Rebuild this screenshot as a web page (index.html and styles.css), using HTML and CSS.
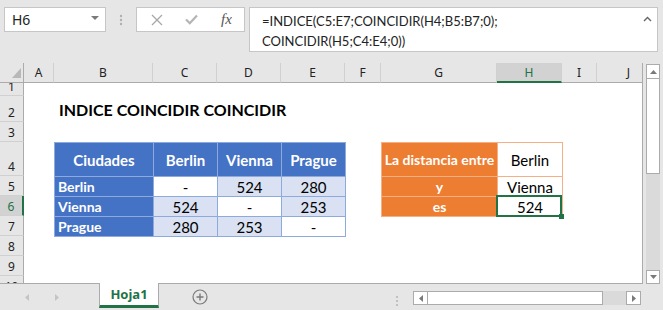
FILE: index.html
```html
<!DOCTYPE html>
<html>
<head>
  <title>INDICE COINCIDIR COINCIDIR</title>
  <link rel="stylesheet" href="styles.css">
</head>
<body>
  <div class="app">

    <!-- name box + formula bar -->
    <div class="toolbar">
      <div class="name-box">
        <span>H6</span>
        <span class="caret"></span>
      </div>
      <div class="grip">
        <svg width="4" height="12" viewBox="0 0 4 12"><circle cx="2" cy="2" r="1.2" fill="#b0b0b0"/><circle cx="2" cy="6" r="1.2" fill="#b0b0b0"/><circle cx="2" cy="10" r="1.2" fill="#b0b0b0"/></svg>
      </div>
      <div class="fn-box">
        <svg class="fn-icon" width="12" height="12" viewBox="0 0 12 12"><path d="M1 1 L11 11 M11 1 L1 11" stroke="#a8a8a8" stroke-width="1.3" fill="none"/></svg>
        <svg class="fn-icon" width="13" height="11" viewBox="0 0 13 11"><path d="M1 5.5 L4.8 9.2 L12 1.5" stroke="#b4b4b4" stroke-width="2.2" fill="none"/></svg>
        <span class="fx">fx</span>
      </div>
      <div class="formula">
        <div class="formula-text">=INDICE(C5:E7;COINCIDIR(H4;B5:B7;0);<br>COINCIDIR(H5;C4:E4;0))</div>
        <svg class="collapse" width="9" height="6" viewBox="0 0 9 6"><path d="M1 5 L4.5 1.5 L8 5" stroke="#666" stroke-width="1.4" fill="none"/></svg>
      </div>
    </div>

    <div class="workspace">
      <div class="sheet">
        <!-- column headers -->
        <div class="corner">
          <svg width="9" height="10" viewBox="0 0 9 10"><polygon points="9,0 9,10 0,10" fill="#b8b8b8"/></svg>
        </div>
        <div class="ch">A</div>
        <div class="ch">B</div>
        <div class="ch">C</div>
        <div class="ch">D</div>
        <div class="ch">E</div>
        <div class="ch">F</div>
        <div class="ch">G</div>
        <div class="ch active">H</div>
        <div class="ch">I</div>
        <div class="ch">J</div>

        <!-- row headers -->
        <div class="rh">1</div>
        <div class="rh">2</div>
        <div class="rh">3</div>
        <div class="rh">4</div>
        <div class="rh">5</div>
        <div class="rh active">6</div>
        <div class="rh">7</div>
        <div class="rh">8</div>
        <div class="rh">9</div>
        <div class="rh">10</div>

        <div class="title">INDICE COINCIDIR COINCIDIR</div>

        <div class="tbl-blue">
          <div class="cell hd">Ciudades</div>
          <div class="cell hd">Berlin</div>
          <div class="cell hd">Vienna</div>
          <div class="cell hd">Prague</div>

          <div class="cell lbl">Berlin</div>
          <div class="cell">-</div>
          <div class="cell lt">524</div>
          <div class="cell lt">280</div>

          <div class="cell lbl">Vienna</div>
          <div class="cell lt">524</div>
          <div class="cell">-</div>
          <div class="cell lt">253</div>

          <div class="cell lbl">Prague</div>
          <div class="cell lt">280</div>
          <div class="cell lt">253</div>
          <div class="cell">-</div>
        </div>

        <div class="tbl-orange">
          <div class="cell og big">La distancia entre</div>
          <div class="cell big-plain">Berlin</div>
          <div class="cell og">y</div>
          <div class="cell">Vienna</div>
          <div class="cell og">es</div>
          <div class="cell selected">524</div>
        </div>
      </div>

      <div class="vscroll">
        <div class="sb-btn">
          <svg width="7" height="4" viewBox="0 0 7 4"><polygon points="0,4 7,4 3.5,0" fill="#7a7a7a"/></svg>
        </div>
        <div class="sb-thumb"></div>
        <div class="sb-track"></div>
        <div class="sb-btn">
          <svg width="7" height="4" viewBox="0 0 7 4"><polygon points="0,0 7,0 3.5,4" fill="#7a7a7a"/></svg>
        </div>
      </div>
    </div>

    <!-- sheet tabs -->
    <div class="tabbar">
      <div class="tab-nav">
        <svg width="4" height="7" viewBox="0 0 4 7"><polygon points="4,0 4,7 0,3.5" fill="#c4c4c4"/></svg>
        <svg width="4" height="7" viewBox="0 0 4 7"><polygon points="0,0 0,7 4,3.5" fill="#c4c4c4"/></svg>
      </div>
      <div class="tab">Hoja1</div>
      <div class="add-sheet">
        <svg width="16" height="16" viewBox="0 0 16 16"><circle cx="8" cy="8" r="7" stroke="#7a7a7a" stroke-width="1.2" fill="none"/><path d="M8 4.5 V11.5 M4.5 8 H11.5" stroke="#7a7a7a" stroke-width="1.4"/></svg>
      </div>
      <div class="tab-grip">
        <svg width="4" height="12" viewBox="0 0 4 12"><circle cx="2" cy="2" r="1.1" fill="#b8b8b8"/><circle cx="2" cy="6" r="1.1" fill="#b8b8b8"/><circle cx="2" cy="10" r="1.1" fill="#b8b8b8"/></svg>
      </div>
      <div class="hscroll">
        <div class="hs-btn">
          <svg width="4" height="7" viewBox="0 0 4 7"><polygon points="4,0 4,7 0,3.5" fill="#7a7a7a"/></svg>
        </div>
        <div class="hs-thumb"></div>
        <div class="hs-track"></div>
        <div class="hs-btn">
          <svg width="4" height="7" viewBox="0 0 4 7"><polygon points="0,0 0,7 4,3.5" fill="#7a7a7a"/></svg>
        </div>
      </div>
    </div>

  </div>
</body>
</html>
```

FILE: styles.css
```css
body {
  margin: 0;
  background: #e6e6e6;
  font-family: 'Lato', 'Liberation Sans', sans-serif;
  color: #000;
}

.app {
  width: 663px;
  height: 310px;
  overflow: hidden;
  background: #e6e6e6;
}

/* toolbar */
.toolbar {
  height: 63px;
  box-sizing: border-box;
  padding: 7px 0 0 4px;
  display: flex;
  align-items: flex-start;
}

.name-box {
  width: 102px;
  height: 25px;
  box-sizing: border-box;
  border: 1px solid #c6c6c6;
  background: #fff;
  display: flex;
  align-items: center;
  justify-content: space-between;
  padding: 0 6px 0 7px;
  font-family: 'Noto Sans', sans-serif;
  font-size: 14px;
  color: #222;
}

.caret {
  width: 0;
  height: 0;
  border-left: 4px solid transparent;
  border-right: 4px solid transparent;
  border-top: 4px solid #7a7a7a;
  margin-top: -3px;
}

.grip {
  width: 30px;
  display: flex;
  justify-content: center;
  padding-top: 7px;
}

.fn-box {
  width: 109px;
  height: 25px;
  box-sizing: border-box;
  border: 1px solid #c6c6c6;
  background: #fff;
  display: flex;
  align-items: center;
  padding-left: 14px;
  gap: 22px;
}

.fx {
  font-family: 'Liberation Serif', serif;
  font-style: italic;
  font-size: 15px;
  color: #555;
  margin-left: 1px;
}

.formula {
  margin-left: 4px;
  width: 409px;
  height: 45px;
  box-sizing: border-box;
  border: 1px solid #c6c6c6;
  background: #fff;
  position: relative;
  padding: 3px 0 0 12px;
}

.formula-text {
  font-size: 13px;
  line-height: 20px;
  color: #222;
}

.collapse {
  position: absolute;
  top: 8px;
  right: 5px;
}

/* grid */
.workspace {
  display: flex;
  height: 221px;
}

.sheet {
  width: 643px;
  height: 221px;
  box-sizing: border-box;
  border-right: 1px solid #ababab;
  border-bottom: 1px solid #ababab;
  background: #fff;
  overflow: hidden;
  display: grid;
  grid-template-columns: 24px 30px 99px 64px 64px 64px 36px 116px 65px 35px 64px;
  grid-template-rows: 20px 13px 26px 20px 34px 20px 20px 20px 20px 20px 20px;
}

.corner {
  background: #e6e6e6;
  border-right: 1px solid #ababab;
  border-bottom: 1px solid #ababab;
  display: flex;
  align-items: flex-end;
  justify-content: flex-end;
  padding: 0 2px 4px 0;
}

.ch {
  background: #e6e6e6;
  border-right: 1px solid #d0d0d0;
  border-bottom: 1px solid #ababab;
  display: flex;
  align-items: center;
  justify-content: center;
  font-family: 'Noto Sans', sans-serif;
  font-size: 12px;
  color: #222;
}

.ch.active {
  background: #d2d2d2;
  color: #217346;
  border-bottom: 2px solid #217346;
}

.rh {
  grid-column: 1;
  background: #e6e6e6;
  border-right: 1px solid #ababab;
  border-bottom: 1px solid #d0d0d0;
  display: flex;
  align-items: flex-end;
  justify-content: center;
  overflow: hidden;
  font-family: 'Noto Sans', sans-serif;
  font-size: 12px;
  line-height: 17px;
  color: #222;
}

.rh.active {
  background: #d2d2d2;
  color: #217346;
  border-right: 2px solid #217346;
}

.title {
  grid-row: 3;
  grid-column: 3 / 9;
  align-self: center;
  padding-left: 5px;
  font-size: 16px;
  font-weight: bold;
  white-space: nowrap;
}

/* data tables */
.tbl-blue,
.tbl-orange {
  display: grid;
  gap: 1px;
  padding: 1px;
  align-self: start;
  justify-self: start;
}

.tbl-blue {
  grid-row: 5 / 9;
  grid-column: 3 / 7;
  grid-template-columns: 98px 63px 63px 63px;
  grid-template-rows: 33px 19px 19px 19px;
  background: #8ea9db;
}

.tbl-orange {
  grid-row: 5 / 8;
  grid-column: 8 / 10;
  grid-template-columns: 115px 64px;
  grid-template-rows: 33px 19px 19px;
  background: #f4b084;
}

.cell {
  background: #fff;
  display: flex;
  align-items: center;
  justify-content: center;
  font-size: 15px;
  white-space: nowrap;
}

.cell.lt {
  background: #d9e1f2;
}

.cell.hd,
.cell.lbl {
  background: #4472c4;
  color: #fff;
  font-weight: bold;
}

.cell.hd {
  font-size: 15px;
}

.cell.lbl {
  justify-content: flex-start;
  padding-left: 3px;
  font-size: 14px;
}

.cell.og {
  background: #ed7d31;
  color: #fff;
  font-weight: bold;
  font-size: 14px;
}

.cell.big-plain {
  font-size: 15px;
}

.cell.selected {
  position: relative;
}

.cell.selected::before {
  content: "";
  position: absolute;
  top: -2px;
  left: -2px;
  right: 0;
  bottom: -1px;
  border: 2px solid #217346;
}

.cell.selected::after {
  content: "";
  position: absolute;
  right: -2px;
  bottom: -3px;
  width: 5px;
  height: 5px;
  background: #217346;
}

/* vertical scrollbar */
.vscroll {
  width: 20px;
  box-sizing: border-box;
  padding: 1px 3px 0 3px;
  display: flex;
  flex-direction: column;
}

.sb-btn {
  height: 15px;
  box-sizing: border-box;
  border: 1px solid #ababab;
  background: #fff;
  display: flex;
  align-items: center;
  justify-content: center;
}

.sb-btn:last-child {
  height: 14px;
}

.sb-thumb {
  height: 95px;
  box-sizing: border-box;
  border: 1px solid #ababab;
  border-top: none;
  background: #fff;
}

.sb-track {
  flex: 1;
  background: #dadada;
}

/* tab bar */
.tabbar {
  height: 26px;
  display: flex;
  align-items: flex-start;
}

.tab-nav {
  width: 99px;
  height: 26px;
  display: flex;
  align-items: center;
  padding-left: 25px;
  gap: 26px;
  box-sizing: border-box;
}

.tab {
  width: 60px;
  height: 25px;
  margin-top: -1px;
  box-sizing: border-box;
  background: #fff;
  border-left: 1px solid #ababab;
  border-right: 1px solid #ababab;
  border-bottom: 3px solid #217346;
  display: flex;
  align-items: center;
  justify-content: center;
  font-family: 'Noto Sans', sans-serif;
  font-weight: bold;
  font-size: 13px;
  color: #217346;
}

.add-sheet {
  width: 16px;
  height: 16px;
  margin: 5px 0 0 33px;
}

.tab-grip {
  margin: 7px 0 0 187px;
}

.hscroll {
  margin: 7px 0 0 14px;
  width: 228px;
  height: 14px;
  display: flex;
}

.hs-btn {
  width: 15px;
  box-sizing: border-box;
  border: 1px solid #ababab;
  background: #fff;
  display: flex;
  align-items: center;
  justify-content: center;
}

.hs-thumb {
  width: 175px;
  box-sizing: border-box;
  border: 1px solid #ababab;
  border-left: none;
  background: #fff;
}

.hs-track {
  flex: 1;
  background: #dadada;
}
```
